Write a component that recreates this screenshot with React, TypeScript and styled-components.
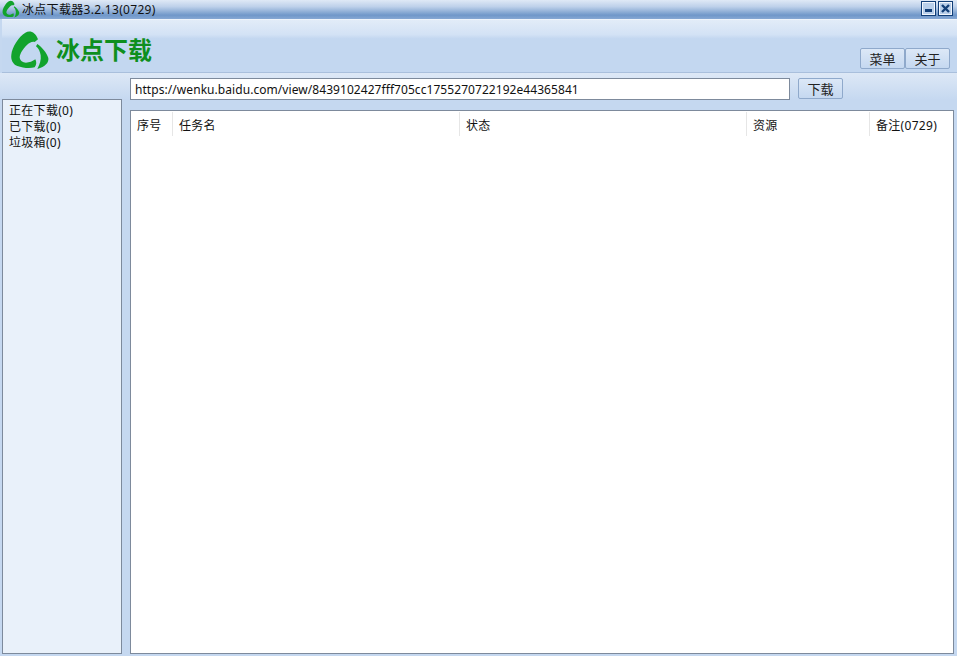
import React from 'react';
import styled, {createGlobalStyle} from 'styled-components';

const GlobalStyle = createGlobalStyle`
    html, body {
        margin: 0;
        padding: 0;
        background: #c5d8f0;
    }

    body {
        font-family: "Noto Sans", "Noto Sans CJK SC", sans-serif;
        font-size: 12px;
        color: #111;
    }
`;

const Logo = ({size}: {size: number}) =>
    <svg width={size} height={size} viewBox="6 8 120 120">
        <path
            fill="#12a32c"
            d="M52 16 C66 8 82 14 90 36 L80 44 C72 42 64 46 56 54 C46 64 36 78 35 90 C36 100 44 106 54 106 C64 106 74 102 82 96 C86 104 86 112 80 120 C66 124 44 122 28 116 C14 110 8 96 10 82 C12 60 32 28 52 16 Z"
        />
        <path
            fill="#12a32c"
            d="M88 50 C102 60 116 76 121 92 C123 106 112 118 88 125 C95 112 100 98 98 84 C96 72 92 64 84 57 Z"
        />
    </svg>;

const App = () =>
    <Window>
        <GlobalStyle />
        <TitleBar>
            <Logo size={18} />
            <Title>冰点下载器3.2.13(0729)</Title>
            <WinButton>
                <svg width="11" height="11" viewBox="0 0 11 11"><rect x="2" y="6" width="7" height="3" fill="#123f78" /></svg>
            </WinButton>
            <WinButton>
                <svg width="11" height="11" viewBox="0 0 11 11"><path d="M2 2L9 9M9 2L2 9" stroke="#123f78" strokeWidth="2.400" /></svg>
            </WinButton>
        </TitleBar>
        <Header>
            <LogoWrap>
                <Logo size={40} />
                <LogoText>冰点下载</LogoText>
            </LogoWrap>
            <HeaderButtons>
                <SkinButton>菜单</SkinButton>
                <SkinButton>关于</SkinButton>
            </HeaderButtons>
        </Header>
        <Body>
            <Side>
                <SideList>
                    <div>正在下载(0)</div>
                    <div>已下载(0)</div>
                    <div>垃圾箱(0)</div>
                </SideList>
            </Side>
            <Main>
                <UrlRow>
                    <UrlInput readOnly value="https://wenku.baidu.com/view/8439102427fff705cc1755270722192e44365841" />
                    <SkinButton>下载</SkinButton>
                </UrlRow>
                <TaskBox>
                    <TaskHead>
                        <Col $width={42}>序号</Col>
                        <Col $width={287}>任务名</Col>
                        <Col $width={287}>状态</Col>
                        <Col $width={123}>资源</Col>
                        <Col $width={84} $last>备注(0729)</Col>
                    </TaskHead>
                </TaskBox>
            </Main>
        </Body>
    </Window>;

export default App;

const Window = styled.div`
    width: 957px;
    height: 656px;
    display: flex;
    flex-direction: column;
    overflow: hidden;
    background: #c5d8f0;
`;

const TitleBar = styled.div`
    height: 19px;
    flex: none;
    display: flex;
    align-items: center;
    padding: 0 4px 2px 2px;
    box-sizing: border-box;
    background: linear-gradient(#dfe9f6 0, #bed1ea 35%, #6f97c9 80%, #86a8d4 100%);
`;

const Title = styled.span`
    flex: 1;
    margin: 1px 0 0 2px;
    line-height: 17px;
    letter-spacing: 0.3px;
`;

const WinButton = styled.div`
    width: 15px;
    height: 15px;
    margin-left: 2px;
    box-sizing: border-box;
    display: flex;
    align-items: center;
    justify-content: center;
    border: 1px solid #123f78;
    box-shadow: inset 0 0 0 1px #f2f6fc;
    background: #b9cfea;
`;

const Header = styled.div`
    height: 54px;
    flex: none;
    display: flex;
    justify-content: space-between;
    align-items: flex-end;
    box-sizing: border-box;
    margin-left: 2px;
    padding: 0 7px 3px 8px;
    border-top: 1px solid #eef4fb;
    border-bottom: 1px solid #a9bfdc;
    background: linear-gradient(#e2ecf8 0, #d3e2f5 28%, #c3d7f0 36%, #c3d7f0 100%);
`;

const LogoWrap = styled.div`
    display: flex;
    align-items: center;
    gap: 6px;
    align-self: center;
    margin-top: 10px;
`;

const LogoText = styled.span`
    font-family: "Noto Sans CJK SC", sans-serif;
    font-size: 24px;
    font-weight: 700;
    color: #0e8f1e;
    line-height: 30px;
    margin-top: -2px;
`;

const HeaderButtons = styled.div`
    display: flex;
`;

const SkinButton = styled.button`
    width: 45px;
    height: 21px;
    padding: 0;
    font: inherit;
    font-size: 13px;
    color: #222;
    border: 1px solid #8fa9cb;
    border-radius: 2px;
    background: linear-gradient(#dce8f7, #c5d8f0);
`;

const Body = styled.div`
    flex: 1;
    min-height: 0;
    display: flex;
    padding: 0 3px 2px 2px;
    background: linear-gradient(#dde8f6 0, #c5d8f0 27px);
`;

const Side = styled.div`
    width: 120px;
    flex: none;
    padding-top: 26px;
    display: flex;
    flex-direction: column;
`;

const SideList = styled.div`
    flex: 1;
    box-sizing: border-box;
    padding: 3px 6px;
    line-height: 16px;
    letter-spacing: 0.3px;
    background: #e9f1fa;
    border: 1px solid #7d8a9c;
`;

const Main = styled.div`
    flex: 1;
    min-width: 0;
    display: flex;
    flex-direction: column;
    padding-left: 8px;
`;

const UrlRow = styled.div`
    height: 37px;
    flex: none;
    display: flex;
    align-items: flex-start;
    gap: 8px;
    padding-top: 5px;
    box-sizing: border-box;
`;

const UrlInput = styled.input`
    width: 660px;
    height: 22px;
    box-sizing: border-box;
    padding: 0 4px;
    font: inherit;
    letter-spacing: 0.06px;
    color: #111;
    background: #fff;
    border: 1px solid #7d8a9c;
    outline: none;
`;

const TaskBox = styled.div`
    flex: 1;
    background: #fff;
    border: 1px solid #7d8a9c;
`;

const TaskHead = styled.div`
    display: flex;
    height: 24px;
    margin-top: 1px;
`;

const Col = styled.div<{$width: number; $last?: boolean}>`
    width: ${p => p.$width}px;
    flex: none;
    box-sizing: border-box;
    padding: 2px 0 0 6px;
    line-height: 24px;
    letter-spacing: 0.3px;
    border-right: ${p => p.$last ? 'none' : '1px solid #e6e6e6'};
`;
